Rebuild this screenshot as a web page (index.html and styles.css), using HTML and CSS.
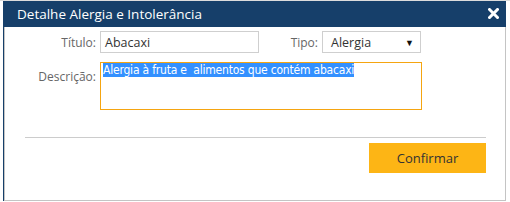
FILE: index.html
```html
<!DOCTYPE html>
<html lang="pt">
<head>
  <meta charset="UTF-8">
  <title>Detalhe Alergia e Intolerância</title>
  <link rel="stylesheet" href="styles.css">
</head>
<body>

<div class="dialog">
  <div class="dialog-header">
    <span class="dialog-title">Detalhe Alergia e Intolerância</span>
    <svg class="close" width="11" height="11" viewBox="0 0 11 11">
      <path d="M1.5 1.5 L9.5 9.5 M9.5 1.5 L1.5 9.5" stroke="#fff" stroke-width="3" stroke-linecap="square"/>
    </svg>
  </div>

  <div class="dialog-body">
    <div class="form-row">
      <label class="label">Título:</label>
      <div class="input title-input">Abacaxi</div>
      <label class="label label-tipo">Tipo:</label>
      <div class="input select">
        <span>Alergia</span>
        <span class="arrow">▼</span>
      </div>
    </div>

    <div class="form-row desc-row">
      <label class="label label-desc">Descrição:</label>
      <div class="textarea"><span class="selected">Alergia à fruta e&nbsp; alimentos que contém abacaxi</span></div>
    </div>

    <hr class="separator">

    <div class="actions">
      <button class="btn-confirm">Confirmar</button>
    </div>
  </div>
</div>

</body>
</html>
```

FILE: styles.css
```css
body {
  margin: 0;
  background: #fff;
  font-family: "Open Sans", Arial, sans-serif;
  border-top: 1px solid #dcdcdc;
}
.dialog {
  margin-left: 3px;
  width: 502px;
  border-left: 1px solid #163f6a;
}
.dialog-header {
  height: 26px;
  background: #163f6a;
  display: flex;
  align-items: center;
  justify-content: space-between;
  padding: 0 7px 0 13px;
}
.dialog-title {
  color: #fff;
  font-size: 13.5px;
  margin-top: -1px;
}
.close {
  display: block;
  margin-top: -2px;
}
.dialog-body {
  border-left: 1px solid #c4c4c4;
  border-right: 1px solid #c4c4c4;
  border-bottom: 1px solid #c4c4c4;
  padding: 4px 0 27px 0;
}
.form-row {
  display: flex;
  align-items: center;
}
.label {
  width: 91px;
  padding-right: 4px;
  text-align: right;
  font-size: 12px;
  color: #666;
}
.input {
  box-sizing: border-box;
  height: 22px;
  border: 1px solid #cfcfcf;
  font-size: 12.5px;
  color: #333;
  padding: 0 4px;
  display: flex;
  align-items: center;
}
.title-input {
  width: 159px;
}
.label-tipo {
  width: 59px;
}
.select {
  width: 99px;
  justify-content: space-between;
  padding: 0 6px 0 8px;
}
.arrow {
  font-size: 9px;
  color: #111;
}
.desc-row {
  margin-top: 9px;
  align-items: flex-start;
}
.label-desc {
  padding-top: 6px;
}
.textarea {
  box-sizing: border-box;
  width: 322px;
  height: 48px;
  border: 1px solid #f5a511;
  padding: 0 2px;
  font-family: "DejaVu Sans Condensed", "DejaVu Sans", sans-serif;
  font-stretch: condensed;
  font-size: 12px;
  letter-spacing: -0.2px;
  line-height: 15px;
}
.selected {
  background: #3390ff;
  color: #fff;
}
.separator {
  border: 0;
  border-top: 1px solid #ccc;
  margin: 27px 19px 0 20px;
}
.actions {
  display: flex;
  justify-content: flex-end;
  padding: 5px 19px 0 0;
}
.btn-confirm {
  width: 117px;
  height: 30px;
  border: 0;
  background: #fdb515;
  color: #333;
  font-family: "Open Sans", Arial, sans-serif;
  font-size: 13px;
}
```
